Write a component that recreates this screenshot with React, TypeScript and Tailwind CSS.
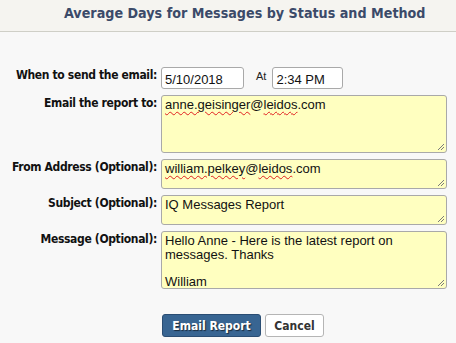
import type { ReactNode } from 'react'

const labelFont = "font-['DejaVu_Sans_Condensed','DejaVu_Sans',sans-serif] font-bold font-stretch-condensed"
const fieldFont = "font-['Liberation_Sans',Arial,sans-serif]"

const Grip = () => (
  <svg className="absolute right-[1px] bottom-[1px]" width="9" height="9" viewBox="0 0 9 9">
    <path d="M8 2 L2 8 M8 5 L5 8" stroke="#7a7a7a" strokeWidth="1" />
  </svg>
)

const Spell = ({ children }: { children: ReactNode }) => (
  <span className="underline decoration-wavy decoration-[#e02020] decoration-1 underline-offset-2">{children}</span>
)

const Area = ({ height, children }: { height: string; children: ReactNode }) => (
  <div
    className={`relative w-[286px] ${height} rounded-[3px] border border-[#a9a9a9] bg-[#ffffc0] px-[3px] pt-[2px] text-[13px] leading-[13.5px] text-[#111] ${fieldFont}`}
  >
    {children}
    <Grip />
  </div>
)

const Label = ({ children }: { children: ReactNode }) => (
  <div className={`pt-[1px] text-right text-[12px] leading-[15px] tracking-[-0.35px] text-[#111] ${labelFont}`}>
    {children}
  </div>
)

export default function App() {
  return (
    <div className="h-[343px] w-[456px] overflow-hidden bg-[#f8f8f8]">
      <div className="flex h-[32px] items-center border-b border-[#cfcfc7] bg-[#f5f4f0] pb-[3px] pl-[64px]">
        <h1 className={`text-[14.2px] text-[#3b4a69] ${labelFont}`}>Average Days for Messages by Status and Method</h1>
      </div>

      <div className="grid grid-cols-[157px_auto] gap-x-[4px] gap-y-[6px] pt-[35px]">
        <Label>When to send the email:</Label>
        <div className="flex items-start">
          <div className={`h-[22px] w-[83px] rounded-[3px] border border-[#a9a9a9] bg-white px-[3px] pt-[2px] text-[13px] text-[#111] ${fieldFont}`}>
            5/10/2018
          </div>
          <span className={`ml-[12px] mr-[6px] pt-[1px] text-[11px] text-[#222] ${fieldFont}`}>At</span>
          <div className={`h-[22px] w-[71px] rounded-[3px] border border-[#a9a9a9] bg-white px-[3px] pt-[2px] text-[13px] text-[#111] ${fieldFont}`}>
            2:34 PM
          </div>
        </div>

        <Label>Email the report to:</Label>
        <Area height="h-[58px]">
          <Spell>anne.geisinger</Spell>@<Spell>leidos</Spell>.com
        </Area>

        <Label>From Address (Optional):</Label>
        <Area height="h-[30px]">
          <Spell>william.pelkey</Spell>@<Spell>leidos</Spell>.com
        </Area>

        <Label>Subject (Optional):</Label>
        <Area height="h-[30px]">IQ Messages Report</Area>

        <Label>Message (Optional):</Label>
        <Area height="h-[58px]">
          Hello Anne - Here is the latest report on
          <br />
          messages. Thanks
          <br />
          <br />
          William
        </Area>
      </div>

      <div className="mt-[25px] flex gap-[4px] pl-[162px]">
        <button
          className={`h-[23px] w-[99px] rounded-[3px] border border-[#2a4d73] bg-[#386592] text-[12px] text-white [text-shadow:1px_1px_1px_#1a2a3a] ${labelFont}`}
        >
          Email Report
        </button>
        <button
          className={`h-[23px] w-[59px] rounded-[3px] border border-[#b5b5b5] bg-white text-[12px] text-[#333] ${labelFont}`}
        >
          Cancel
        </button>
      </div>
    </div>
  )
}
